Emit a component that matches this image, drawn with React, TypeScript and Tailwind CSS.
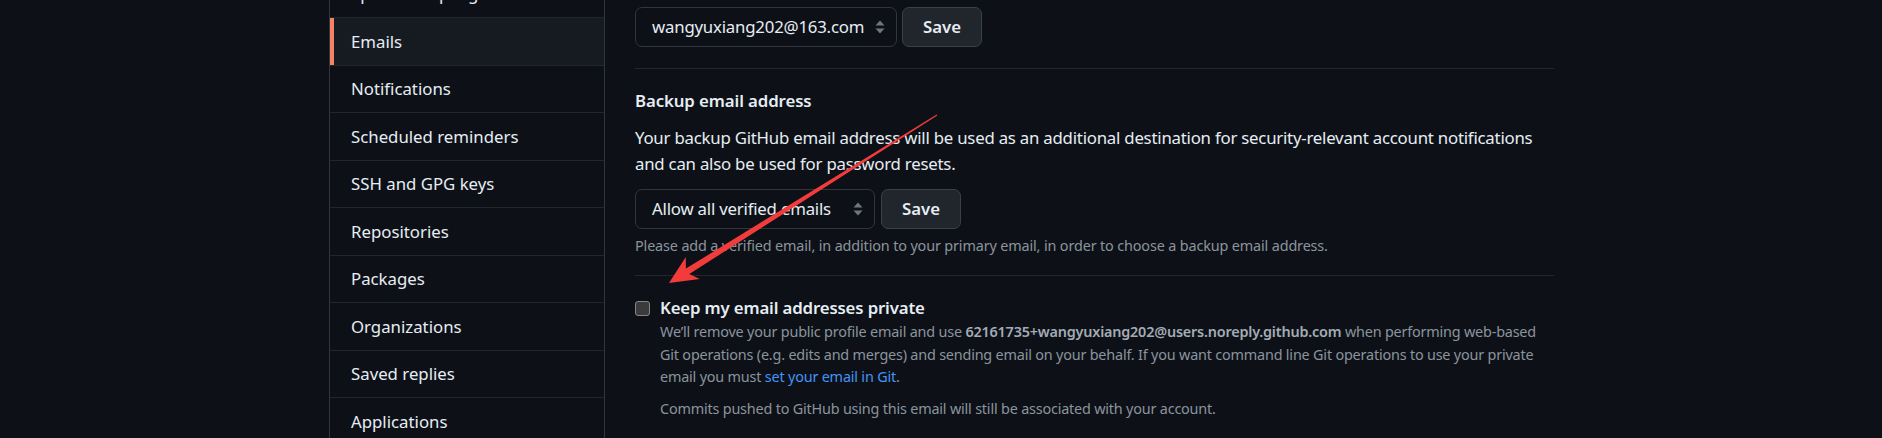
import React from 'react'

const menu = [
  "Sponsorship log",
  "Emails",
  "Notifications",
  "Scheduled reminders",
  "SSH and GPG keys",
  "Repositories",
  "Packages",
  "Organizations",
  "Saved replies",
  "Applications",
]

function Chevrons() {
  return (
    <svg width="10" height="14" viewBox="0 0 10 14" className="shrink-0">
      <path d="M5 0.5 L9.5 5.5 L0.5 5.5 Z" fill="#6e7681" />
      <path d="M5 13.5 L9.5 8.5 L0.5 8.5 Z" fill="#6e7681" />
    </svg>
  )
}

function Select({ value, width }: { value: string; width: string }) {
  return (
    <div className={`flex h-10 items-center justify-between rounded-[7px] border border-[#30363d] bg-[#0d1117] pl-[16px] pr-[11px] ${width}`}>
      <span className="text-[16.8px] tracking-[-0.2px] text-[#e6edf3]">{value}</span>
      <Chevrons />
    </div>
  )
}

function SaveButton() {
  return (
    <button className="h-10 w-[80px] rounded-[7px] border border-[#3a4048] bg-[#21262d] text-[16.8px] font-semibold text-[#e6edf3]">
      Save
    </button>
  )
}

export default function App() {
  return (
    <div className="relative h-[438px] w-[1882px] overflow-hidden bg-[#0d1117] font-['Noto_Sans','Liberation_Sans',sans-serif] text-[#e6edf3]">
      <div className="ml-[329px] flex w-[1225px] gap-[30px]">
        {/* settings menu */}
        <ul className="-mt-[30.5px] w-[276px] shrink-0 border-x border-[#30363d]">
          {menu.map((item) => (
            <li
              key={item}
              className={
                item === "Emails"
                  ? "flex h-[47.5px] items-center border-t border-[#21262d] bg-[#161b22] pl-[21px] text-[16.8px] shadow-[inset_4px_0_0_#f78166]"
                  : "flex h-[47.5px] items-center border-t border-[#21262d] pl-[21px] text-[16.8px]"
              }
            >
              {item}
            </li>
          ))}
        </ul>

        {/* emails content */}
        <div className="w-[919px] pt-[7px]">
          <div className="flex gap-[5px]">
            <Select value="wangyuxiang202@163.com" width="w-[262px]" />
            <SaveButton />
          </div>

          <div className="mt-[21px] h-px bg-[#21262d]" />

          <h3 className="mt-[19px] text-[16.8px] font-semibold leading-[25px] tracking-[-0.1px]">Backup email address</h3>
          <p className="mt-[12px] whitespace-nowrap text-[16.8px] leading-[25.5px] tracking-[-0.22px]">
            Your backup GitHub email address will be used as an additional destination for security-relevant account notifications
            <br />
            and can also be used for password resets.
          </p>

          <div className="mt-[13px] flex gap-[6px]">
            <Select value="Allow all verified emails" width="w-[240px]" />
            <SaveButton />
          </div>
          <p className="mt-[6px] whitespace-nowrap text-[14.4px] leading-[21.6px] tracking-[-0.14px] text-[#8b949e]">
            Please add a verified email, in addition to your primary email, in order to choose a backup email address.
          </p>

          <div className="mt-[18px] h-px bg-[#21262d]" />

          <div className="mt-[19px] flex gap-[10px]">
            <div className="mt-[6px] h-[15px] w-[15px] shrink-0 rounded-[3px] border border-[#858585] bg-[#3b3b3b]" />
            <div>
              <div className="text-[16.8px] font-semibold leading-[25.5px] tracking-[-0.15px]">Keep my email addresses private</div>
              <p className="mt-px whitespace-nowrap text-[14.4px] leading-[22.5px] tracking-[-0.19px] text-[#8b949e]">
                We’ll remove your public profile email and use{" "}
                <strong className="font-semibold text-[#a3acb6]">62161735+wangyuxiang202@users.noreply.github.com</strong> when performing web-based
                <br />
                Git operations (e.g. edits and merges) and sending email on your behalf. If you want command line Git operations to use your private
                <br />
                email you must <a className="text-[#4493f8]">set your email in Git</a>.
              </p>
              <p className="mt-[9.5px] whitespace-nowrap text-[14.4px] leading-[22.5px] tracking-[-0.19px] text-[#8b949e]">
                Commits pushed to GitHub using this email will still be associated with your account.
              </p>
            </div>
          </div>
        </div>
      </div>

      {/* red annotation arrow drawn over the page */}
      <svg className="pointer-events-none absolute inset-0" width="1882" height="438">
        <polygon
          points="937.3,115.5 689.3,274 699.6,279.1 669,283 685.8,257.1 685.9,268.6 936.7,114.5"
          fill="#f23c3c"
        />
      </svg>
    </div>
  )
}
